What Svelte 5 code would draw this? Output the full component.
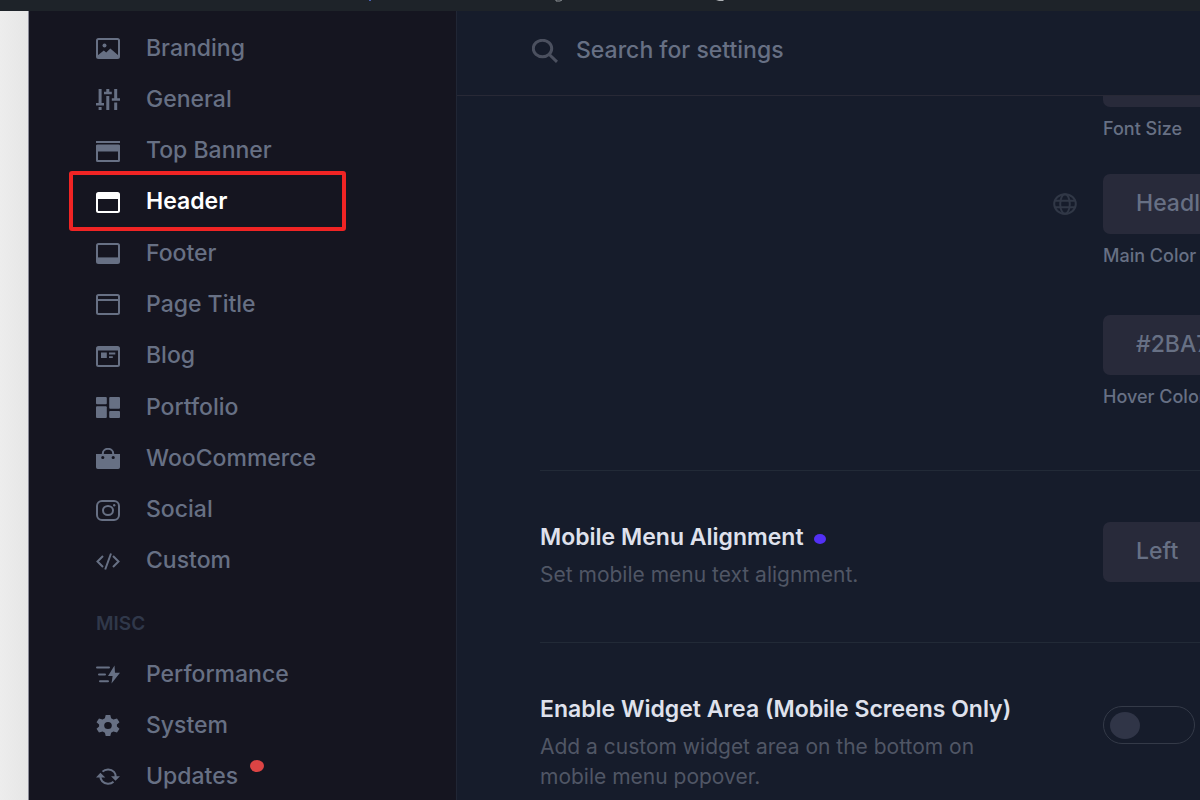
<script>
  const mainItems = [
    { label: 'Branding', icon: 'image' },
    { label: 'General', icon: 'sliders' },
    { label: 'Top Banner', icon: 'banner' },
    { label: 'Header', icon: 'header', active: true },
    { label: 'Footer', icon: 'footer' },
    { label: 'Page Title', icon: 'title' },
    { label: 'Blog', icon: 'blog' },
    { label: 'Portfolio', icon: 'grid' },
    { label: 'WooCommerce', icon: 'bag' },
    { label: 'Social', icon: 'social' },
    { label: 'Custom', icon: 'code' },
  ];
  const miscItems = [
    { label: 'Performance', icon: 'bolt' },
    { label: 'System', icon: 'gear' },
    { label: 'Updates', icon: 'refresh', badge: true },
  ];
  let enabled = $state(false);
</script>

{#snippet icon(name)}
  <svg class="icon" viewBox="0 0 24 21" aria-hidden="true">
    {#if name === 'image'}
      <rect class="line" x="1" y="1" width="22" height="19" rx="1.5" />
      <circle cx="8.5" cy="7.4" r="2" />
      <path d="M1.5 17.5 7.8 12.6 10.2 14.4 14.3 10.4 22.5 17.5V20H1.5z" />
    {:else if name === 'sliders'}
      <path d="M2.6 0h3v14H8v2.6H0V14h2.6zM2.6 18h3v3h-3zM10.3 0h3v2.8h2.5v2.4H8V2.8h2.3zM10.3 7h3v14h-3zM18.2 0h3v9.2H24v2.6h-8.2V9.2h2.4zM18.2 13.6h3V21h-3z" />
    {:else if name === 'banner'}
      <path d="M0 0h24v2H0z" />
      <path fill-rule="evenodd" d="M1.5 3.4h21A1.5 1.5 0 0 1 24 5v14.5a1.5 1.5 0 0 1-1.5 1.5h-21A1.5 1.5 0 0 1 0 19.5V5a1.5 1.5 0 0 1 1.5-1.6zM2 10.5V19h20v-8.5z" />
    {:else if name === 'header'}
      <rect class="line" x="1" y="1" width="22" height="19" rx="1.5" />
      <path d="M1 1h22v6H1z" />
    {:else if name === 'footer'}
      <rect class="line" x="1" y="1" width="22" height="19" rx="1.5" />
      <path d="M1 14.4h22V20H1z" />
    {:else if name === 'title'}
      <rect class="line" x="1" y="1" width="22" height="19" rx="1.5" />
      <path d="M1 5h22v2H1z" />
    {:else if name === 'blog'}
      <rect class="line" x="1" y="1" width="22" height="19" rx="1.5" />
      <path d="M1 1h22v3.5H1zM5 6.5h5.8V12H5zM13 6.5h6.3v1.9H13zM13 10.2h3.8V12H13z" />
    {:else if name === 'grid'}
      <rect width="10.8" height="7.2" rx="1" />
      <rect x="13.2" width="10.8" height="11.8" rx="1" />
      <rect y="9.3" width="10.8" height="11.7" rx="1" />
      <rect x="13.2" y="14" width="10.8" height="7" rx="1" />
    {:else if name === 'bag'}
      <path class="line" d="M6.8 7V5.5a5 4.5 0 0 1 10.4 0V7" />
      <path fill-rule="evenodd" d="M0 6h24v13.2a1.8 1.8 0 0 1-1.8 1.8H1.8A1.8 1.8 0 0 1 0 19.2zM5.2 9.6a1.6 1.5 0 1 0 3.2 0 1.6 1.5 0 1 0-3.2 0M15.6 9.6a1.6 1.5 0 1 0 3.2 0 1.6 1.5 0 1 0-3.2 0" />
    {:else if name === 'social'}
      <rect class="line" x="1" y="1" width="22" height="19" rx="5" />
      <ellipse class="line" cx="12" cy="10.5" rx="5" ry="4.6" />
      <circle cx="18.2" cy="5.3" r="1.2" />
    {:else if name === 'code'}
      <path class="line" d="M7 5 1.5 10.5 7 16M17 5l5.5 5.5L17 16M15 2.5 9.2 18.5" />
    {:else if name === 'bolt'}
      <path class="line" stroke-linecap="round" d="M1 3.5h12M3 10.500h6M4 17.300h8" />
      <path d="M18.5 1.500 12 12h4.600L15.500 19.500 24 8.800h-5z" />
    {:else if name === 'gear'}
      <path fill-rule="evenodd" d="M9.700 0h4.600l.8 3.200 2.300 1.200 3.600-1 2.500 3.900-2.600 2.300v1.800l2.600 2.300-2.500 3.900-3.600-1-2.300 1.200-.8 3.200H9.700l-.8-3.200-2.300-1.200-3.600 1L.500 13.700l2.600-2.300V9.600L.500 7.300 3 3.400l3.600 1 2.300-1.200zM8.200 10.500a3.800 3.500 0 1 0 7.600 0 3.800 3.500 0 1 0-7.600 0" />
    {:else if name === 'refresh'}
      <path class="line" d="M6.500 5.600C9.500 2.500 15 2.700 18 5.900c1.300 1.400 1.700 3 1.700 5.100M17.500 15.800c-3 2.800-8.500 2.500-11.300-.5-1.400-1.500-2-3.300-1.800-5.800" />
      <path d="M0 11.500 4.400 6.800 9.300 11.500zM15 10.200h9L19.500 14.800z" />
    {/if}
  </svg>
{/snippet}

{#snippet navItem(item)}
  <li>
    <a href="#{item.icon}" class:active={item.active} aria-current={item.active ? 'page' : undefined}>
      {@render icon(item.icon)}
      <span class="name">{item.label}{#if item.badge}<i class="badge"></i>{/if}</span>
    </a>
  </li>
{/snippet}

<div class="page">
  <div class="topbar">
    <svg viewBox="0 0 1200 11" preserveAspectRatio="xMinYMin meet" aria-hidden="true">
      <path d="M369 0h2v1h-2z" fill="#4a62b5" />
      <path d="M556 0v1h4l2-1" fill="none" stroke="#8d9296" />
      <path d="M716 0h7l1 1h-5z" fill="#aeb2b5" />
    </svg>
  </div>
  <div class="shell">
    <div class="gutter"></div>
    <nav class="sidebar" aria-label="Theme settings">
      <ul class="primary">
        {#each mainItems as item}{@render navItem(item)}{/each}
      </ul>
      <h2>MISC</h2>
      <ul>
        {#each miscItems as item}{@render navItem(item)}{/each}
      </ul>
    </nav>
    <main>
      <label class="search">
        <svg viewBox="0 0 26 24" aria-hidden="true">
          <ellipse cx="10.5" cy="9.5" rx="9.2" ry="8.2" />
          <path d="M17.3 15.5 25 22.8" />
        </svg>
        <input type="search" placeholder="Search for settings" aria-label="Search for settings" />
      </label>
      <div class="settings">
        <section class="row typography">
          <div></div>
          <div class="fields">
            <div class="field">
              <input id="font-size" type="text" />
              <label for="font-size">Font Size</label>
            </div>
            <div class="field">
              <svg class="globe" viewBox="0 0 24 22" aria-hidden="true">
                <ellipse cx="12" cy="11" rx="10.8" ry="9.8" />
                <ellipse cx="12" cy="11" rx="4.8" ry="9.8" />
                <path d="M2 7.7h20M2 14.3h20" />
              </svg>
              <input id="main-color" type="text" value="Headl" />
              <label for="main-color">Main Color</label>
            </div>
            <div class="field last">
              <input id="hover-color" type="text" value="#2BA7" />
              <label for="hover-color">Hover Color</label>
            </div>
          </div>
        </section>
        <section class="row">
          <div class="about">
            <h3><label for="alignment">Mobile Menu Alignment</label><i class="dot"></i></h3>
            <p>Set mobile menu text alignment.</p>
          </div>
          <div class="fields">
            <div class="field">
              <select id="alignment"><option>Left</option></select>
            </div>
          </div>
        </section>
        <section class="row">
          <div class="about">
            <h3><label for="widget-area">Enable Widget Area (Mobile Screens Only)</label></h3>
            <p>Add a custom widget area on the bottom on mobile menu popover.</p>
          </div>
          <div class="fields">
            <div class="field">
              <input id="widget-area" class="toggle" type="checkbox" role="switch" bind:checked={enabled} />
            </div>
          </div>
        </section>
      </div>
    </main>
  </div>
</div>

<style>
  :global(body) {
    margin: 0;
    background: #161c2b;
  }
  .page {
    display: flex;
    flex-direction: column;
    height: 100vh;
    overflow: hidden;
    font-family: Inter, 'Liberation Sans', sans-serif;
    font-size: 23px;
    color: #677084;
  }
  .page * {
    box-sizing: border-box;
  }
  .topbar {
    flex: none;
    height: 11px;
    background: #1e2329;
    overflow: hidden;
  }
  .topbar svg {
    display: block;
    width: 1200px;
    height: 11px;
  }
  .shell {
    flex: 1;
    display: flex;
    min-height: 0;
  }
  .gutter {
    flex: none;
    width: 29px;
    background: linear-gradient(to right, #ededed, #e6e6e6);
    border-right: 1px solid #8b8c98;
  }
  .sidebar {
    flex: none;
    width: 428px;
    padding-top: 11px;
    background: #151520;
    border-right: 1px solid #202635;
    overflow: hidden;
  }
  ul {
    margin: 0;
    padding: 0;
    list-style: none;
  }
  .primary {
    display: flex;
    flex-direction: column;
    justify-content: space-between;
    min-height: 564px;
  }
  .sidebar a {
    position: relative;
    display: flex;
    align-items: center;
    gap: 26px;
    height: 51px;
    padding-left: 67px;
    color: #677084;
    font-weight: 500;
    text-decoration: none;
  }
  .sidebar a.active {
    color: #fff;
    font-weight: 600;
  }
  .sidebar a.active::after {
    content: '';
    position: absolute;
    inset: -5px 110px -4px 40px;
    border: 4px solid #f02424;
    border-radius: 3px;
  }
  .icon {
    flex: none;
    width: 24px;
    height: 21px;
    margin-top: 2px;
    fill: currentColor;
  }
  .icon .line {
    fill: none;
    stroke: currentColor;
    stroke-width: 2;
  }
  .name {
    position: relative;
  }
  .badge {
    position: absolute;
    top: -2px;
    right: -26px;
    width: 14px;
    height: 12px;
    border-radius: 50%;
    background: #dc4444;
  }
  h2 {
    margin: 0;
    padding: 24px 0 10px 67px;
    font-size: 19px;
    line-height: 28px;
    font-weight: 600;
    color: #30384a;
  }
  main {
    flex: 1;
    display: flex;
    flex-direction: column;
    min-width: 0;
    background: #161c2b;
    overflow: hidden;
  }
  .search {
    flex: none;
    display: flex;
    align-items: center;
    gap: 18px;
    height: 85px;
    padding: 0 0 6px 75px;
    border-bottom: 1px solid #282936;
  }
  .search svg {
    flex: none;
    width: 26px;
    height: 24px;
    margin-top: 2px;
    fill: none;
    stroke: #4b505f;
    stroke-width: 3;
  }
  input,
  select {
    font: inherit;
    font-weight: 500;
    color: #677084;
    border: 0;
    outline: 0;
    appearance: none;
  }
  .search input {
    flex: 1;
    min-width: 0;
    padding: 0;
    background: none;
  }
  .search input::placeholder {
    color: #677084;
    opacity: 1;
  }
  .settings {
    flex: 1;
    min-height: 0;
    padding-left: 83px;
    overflow: hidden;
  }
  .row {
    display: grid;
    grid-template-columns: 513px minmax(320px, 1fr);
    padding: 51px 0 52px;
    border-bottom: 1px solid #222a37;
  }
  .row:last-child {
    border-bottom: 0;
  }
  .typography {
    margin-top: -100px;
    padding-bottom: 51px;
  }
  .field {
    display: grid;
    grid-template-columns: 50px 1fr;
    align-items: center;
  }
  .typography .field + .field {
    margin-top: 23px;
  }
  .typography .field.last {
    margin-top: 37px;
  }
  .field input,
  .field select,
  .field label {
    grid-column: 2;
  }
  .field input:not(.toggle),
  .field select {
    width: 100%;
    height: 60px;
    padding: 0 33px 3px;
    border-radius: 7px;
    background: #282a3a;
  }
  .field label {
    font-size: 18px;
    font-weight: 500;
    line-height: 44px;
    white-space: nowrap;
  }
  .globe {
    width: 24px;
    height: 22px;
    fill: none;
    stroke: #303746;
    stroke-width: 2;
  }
  h3 {
    display: flex;
    align-items: center;
    gap: 10px;
    margin: 0 0 8px;
    font-size: 23px;
    line-height: 30px;
    font-weight: 600;
    color: #dfe1ec;
    white-space: nowrap;
  }
  .dot {
    width: 12px;
    height: 10px;
    margin-top: 4px;
    border-radius: 50%;
    background: #5330f5;
  }
  p {
    max-width: 460px;
    margin: 0;
    font-size: 21px;
    line-height: 30px;
    color: #505665;
  }
  .toggle {
    display: flex;
    align-items: center;
    width: 92px;
    height: 38px;
    margin: 12px 0 0;
    padding: 0 6px;
    border: 1px solid #343a48;
    border-radius: 19px;
  }
  .toggle::before {
    content: '';
    width: 30px;
    height: 27px;
    border-radius: 50%;
    background: #303547;
  }
  .toggle:checked {
    justify-content: flex-end;
  }
</style>
